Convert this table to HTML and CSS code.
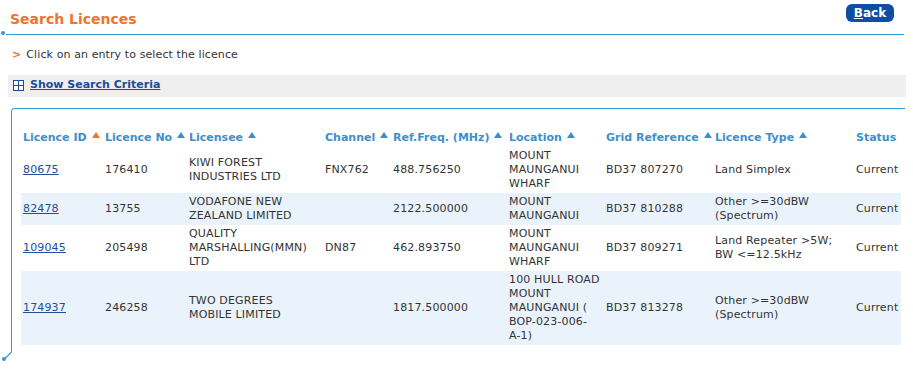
FILE: index.html
```html
<!DOCTYPE html>
<html lang="en">
<head>
<meta charset="utf-8">
<title>Search Licences</title>
<link rel="stylesheet" href="styles.css">
</head>
<body>
<div class="page-head">
  <h1 class="page-title">Search Licences</h1>
  <a class="btn-back" href="#"><u>B</u>ack</a>
</div>

<p class="hint"><span class="hint-mark">&gt;</span>Click on an entry to select the licence</p>

<div class="criteria-bar">
  <span class="expand-icon"></span>
  <a class="criteria-link" href="#">Show Search Criteria</a>
</div>

<div class="results">
  <table class="grid">
    <colgroup>
      <col style="width:82px"><col style="width:84px"><col style="width:136px">
      <col style="width:68px"><col style="width:116px"><col style="width:97px">
      <col style="width:109px"><col style="width:141px"><col style="width:47px">
    </colgroup>
    <thead>
      <tr>
        <th>Licence ID<span class="sort active"></span></th>
        <th>Licence No<span class="sort"></span></th>
        <th>Licensee<span class="sort"></span></th>
        <th>Channel<span class="sort"></span></th>
        <th>Ref.Freq. (MHz)<span class="sort"></span></th>
        <th>Location<span class="sort"></span></th>
        <th>Grid Reference<span class="sort"></span></th>
        <th>Licence Type<span class="sort"></span></th>
        <th>Status</th>
      </tr>
    </thead>
    <tbody>
      <tr>
        <td><a href="#">80675</a></td>
        <td>176410</td>
        <td>KIWI FOREST INDUSTRIES LTD</td>
        <td>FNX762</td>
        <td>488.756250</td>
        <td class="loc">MOUNT MAUNGANUI WHARF</td>
        <td>BD37 807270</td>
        <td>Land Simplex</td>
        <td>Current</td>
      </tr>
      <tr class="alt">
        <td><a href="#">82478</a></td>
        <td>13755</td>
        <td>VODAFONE NEW ZEALAND LIMITED</td>
        <td></td>
        <td>2122.500000</td>
        <td class="loc">MOUNT MAUNGANUI</td>
        <td>BD37 810288</td>
        <td>Other &gt;=30dBW (Spectrum)</td>
        <td>Current</td>
      </tr>
      <tr>
        <td><a href="#">109045</a></td>
        <td>205498</td>
        <td>QUALITY MARSHALLING(MMN) LTD</td>
        <td>DN87</td>
        <td>462.893750</td>
        <td class="loc">MOUNT MAUNGANUI WHARF</td>
        <td>BD37 809271</td>
        <td>Land Repeater &gt;5W; BW &lt;=12.5kHz</td>
        <td>Current</td>
      </tr>
      <tr class="alt">
        <td><a href="#">174937</a></td>
        <td>246258</td>
        <td>TWO DEGREES MOBILE LIMITED</td>
        <td></td>
        <td>1817.500000</td>
        <td class="loc">100 HULL ROAD MOUNT MAUNGANUI ( BOP-023-006-<span class="keep">A-1)</span></td>
        <td>BD37 813278</td>
        <td>Other &gt;=30dBW (Spectrum)</td>
        <td>Current</td>
      </tr>
    </tbody>
  </table>
</div>
<div class="results-foot">
  <svg width="14" height="10" viewBox="0 0 14 10">
    <path d="M11.5 0 L5 6.5" stroke="#3399d6" stroke-width="1.2" fill="none"/>
    <circle cx="4" cy="7" r="2" fill="#3399d6"/>
  </svg>
</div>
</body>
</html>
```

FILE: styles.css
```css
html, body {
  margin: 0;
  padding: 0;
  background: #fff;
}

body {
  font-family: "DejaVu Sans", Verdana, sans-serif;
  font-size: 11px;
  color: #333;
}

/* Title bar with blue rule underneath */
.page-head {
  position: relative;
  display: flex;
  justify-content: space-between;
  align-items: flex-start;
  margin: 0 9px 0 6px;
  border-bottom: 1px solid #3399d6;
}

.page-head::before {
  content: "";
  position: absolute;
  left: -5px;
  bottom: -1px;
  width: 4px;
  height: 4px;
  border-radius: 50%;
  background: #3399d6;
}

.page-title {
  margin: 0;
  padding: 9px 0 5px 4px;
  font-size: 14px;
  line-height: 20px;
  font-weight: bold;
  color: #ec7530;
}

.btn-back {
  margin: 4px 10px 0 0;
  width: 48px;
  height: 18px;
  line-height: 18px;
  border-radius: 6px;
  background: #0c4ea3;
  color: #fff;
  font-weight: bold;
  font-size: 12px;
  text-align: center;
  text-decoration: none;
}

.btn-back u {
  text-decoration: underline;
}

/* Instruction line */
.hint {
  margin: 12px 0 0 0;
  padding-left: 12px;
  line-height: 16px;
  letter-spacing: 0.1px;
}

.hint-mark {
  color: #ec7530;
  font-weight: bold;
  margin-right: 5px;
}

/* Grey search criteria toggle */
.criteria-bar {
  display: flex;
  align-items: flex-start;
  gap: 6px;
  margin: 12px 7px 0 8px;
  height: 19px;
  padding: 3px 0 0 5px;
  background: #efefef;
}

.expand-icon {
  width: 9px;
  height: 9px;
  margin-top: 2px;
  border: 1px solid #1a4c9c;
  background:
    linear-gradient(#1a4c9c, #1a4c9c) center / 1px 100% no-repeat,
    linear-gradient(#1a4c9c, #1a4c9c) center / 100% 1px no-repeat,
    #fff;
}

.criteria-link {
  line-height: 14px;
  color: #1a4c9c;
  font-weight: bold;
  text-decoration: underline;
}

/* Results box: rounded top-left corner */
.results {
  margin: 11px 8px 0 11px;
  padding: 20px 0 7px 9px;
  border-top: 1px solid #3399d6;
  border-left: 1px solid #3399d6;
  border-top-left-radius: 4px;
}

/* Tail with a dot below the results box */
.results-foot {
  height: 10px;
}

.results-foot svg {
  display: block;
}

.grid {
  table-layout: fixed;
  width: 880px;
  border-collapse: collapse;
  border-spacing: 0;
}

.grid th,
.grid td {
  padding: 2px 6px 2px 2px;
  line-height: 14px;
  text-align: left;
  vertical-align: middle;
}

.grid td {
  letter-spacing: 0.15px;
}

.grid td.loc {
  padding-right: 0;
}

.keep {
  white-space: nowrap;
}

.grid th {
  color: #3d8fcc;
  font-weight: bold;
  white-space: nowrap;
}

.sort {
  display: inline-block;
  width: 0;
  height: 0;
  margin-left: 5px;
  border-left: 4px solid transparent;
  border-right: 4px solid transparent;
  border-bottom: 6px solid #3d8fcc;
  vertical-align: 3px;
}

.sort.active {
  border-bottom-color: #ec7530;
}

.grid tr.alt td {
  background: #eaf3fb;
}

.grid td a {
  color: #1f4e9b;
  text-decoration: underline;
}
```
